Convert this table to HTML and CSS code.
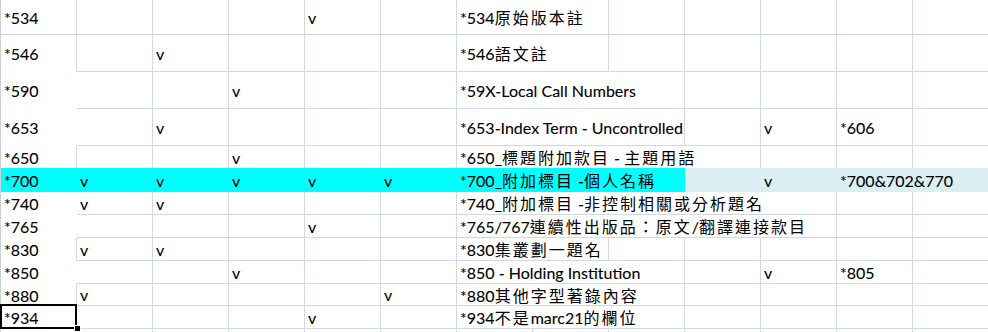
FILE: index.html
```html
<!DOCTYPE html>
<html lang="zh-Hant">
<head>
<meta charset="utf-8">
<title>Sheet</title>
<link rel="stylesheet" href="styles.css">
</head>
<body>
<div class="sheet">
  <div class="row r35">
    <div class="c">*534</div><div class="c"></div><div class="c"></div><div class="c"></div><div class="c">v</div><div class="c"></div>
    <div class="c s2"><span class="t">*534<span class="k">原始版本註</span></span></div>
    <div class="c"></div><div class="c"></div><div class="c"></div><div class="c"></div><div class="c"></div>
  </div>
  <div class="row r37">
    <div class="c nb">*546</div><div class="c"></div><div class="c">v</div><div class="c"></div><div class="c"></div><div class="c"></div>
    <div class="c s2"><span class="t">*546<span class="k">語文註</span></span></div>
    <div class="c"></div><div class="c"></div><div class="c"></div><div class="c"></div><div class="c"></div>
  </div>
  <div class="row r37">
    <div class="c nb nr">*590</div><div class="c"></div><div class="c"></div><div class="c">v</div><div class="c"></div><div class="c"></div>
    <div class="c s3"><span class="t">*59X-Local Call Numbers</span></div>
    <div class="c"></div><div class="c"></div><div class="c"></div><div class="c"></div>
  </div>
  <div class="row r37">
    <div class="c nb nr">*653</div><div class="c"></div><div class="c">v</div><div class="c"></div><div class="c"></div><div class="c"></div>
    <div class="c s3"><span class="t">*653-Index Term - Uncontrolled</span></div>
    <div class="c"></div><div class="c">v</div><div class="c">*606</div><div class="c"></div>
  </div>
  <div class="row r22">
    <div class="c nb">*650</div><div class="c nb"></div><div class="c nb"></div><div class="c nb">v</div><div class="c nb"></div><div class="c nb"></div>
    <div class="c nb s4"><span class="t">*650_<span class="k">標題附加款目</span> - <span class="k">主題用語</span></span></div>
    <div class="c nb"></div><div class="c nb"></div><div class="c nb"></div>
  </div>
  <div class="row r24">
    <div class="c f cy">*700</div><div class="c f cy">v</div><div class="c f cy">v</div><div class="c f cy">v</div><div class="c f cy">v</div><div class="c f cy">v</div>
    <div class="c f cy s3"><span class="t">*700_<span class="k">附加標目</span> -<span class="k">個人名稱</span></span></div>
    <div class="c f lb"></div><div class="c f lb">v</div><div class="c f lb"><span class="t">*700&amp;702&amp;770</span></div><div class="c f lb"></div>
  </div>
  <div class="row r23">
    <div class="c nb nr">*740</div><div class="c">v</div><div class="c">v</div><div class="c"></div><div class="c"></div><div class="c"></div>
    <div class="c s5"><span class="t">*740_<span class="k">附加標目</span> -<span class="k">非控制相關或分析題名</span></span></div>
    <div class="c"></div><div class="c"></div>
  </div>
  <div class="row r23">
    <div class="c nb nr">*765</div><div class="c"></div><div class="c"></div><div class="c"></div><div class="c">v</div><div class="c"></div>
    <div class="c s5"><span class="t">*765/767<span class="k">連續性出版品：原文</span>/<span class="k">翻譯連接款目</span></span></div>
    <div class="c"></div><div class="c"></div>
  </div>
  <div class="row r23">
    <div class="c nb">*830</div><div class="c">v</div><div class="c">v</div><div class="c"></div><div class="c"></div><div class="c"></div>
    <div class="c s2"><span class="t">*830<span class="k">集叢劃一題名</span></span></div>
    <div class="c"></div><div class="c"></div><div class="c"></div><div class="c"></div><div class="c"></div>
  </div>
  <div class="row r23">
    <div class="c nb nr">*850</div><div class="c"></div><div class="c"></div><div class="c">v</div><div class="c"></div><div class="c"></div>
    <div class="c s3"><span class="t">*850 - Holding Institution</span></div>
    <div class="c"></div><div class="c">v</div><div class="c">*805</div><div class="c"></div>
  </div>
  <div class="row r22">
    <div class="c nb">*880</div><div class="c">v</div><div class="c"></div><div class="c"></div><div class="c"></div><div class="c">v</div>
    <div class="c s3"><span class="t">*880<span class="k">其他字型著錄內容</span></span></div>
    <div class="c"></div><div class="c"></div><div class="c"></div><div class="c"></div>
  </div>
  <div class="row r23">
    <div class="c sel">*934<span class="selbox"></span><span class="handle"></span></div><div class="c"></div><div class="c"></div><div class="c"></div><div class="c">v</div><div class="c"></div>
    <div class="c s3"><span class="t">*934<span class="k">不是</span>marc21<span class="k">的欄位</span></span></div>
    <div class="c"></div><div class="c"></div><div class="c"></div><div class="c"></div>
  </div>
  <div class="row r3">
    <div class="c nb"></div><div class="c nb"></div><div class="c nb"></div><div class="c nb"></div><div class="c nb"></div><div class="c nb"></div><div class="c nb"></div>
    <div class="c nb"></div><div class="c nb"></div><div class="c nb"></div><div class="c nb"></div><div class="c nb"></div><div class="c nb"></div>
  </div>
</div>
</body>
</html>
```

FILE: styles.css
```css
html, body {
  margin: 0;
  padding: 0;
  background: #ffffff;
  overflow: hidden;
  width: 988px;
  height: 332px;
}

.sheet {
  width: 989px;
  border-left: 1px solid #c8d0de;
  box-sizing: border-box;
  font-family: "Lato", "Noto Sans CJK TC", sans-serif;
  font-size: 16px;
  color: #000000;
  -webkit-text-stroke: 0.1px #000000;
}

.row {
  display: grid;
  grid-template-columns: repeat(13, 76px);
}

.r35 { height: 35px; }
.r37 { height: 37px; }
.r22 { height: 22px; }
.r24 { height: 24px; }
.r23 { height: 23px; }
.r3 { height: 3px; }

.c {
  box-sizing: border-box;
  border-right: 1px solid #d0d7e5;
  border-bottom: 1px solid #d0d7e5;
  padding: 1px 3px 0 3px;
  display: flex;
  align-items: center;
  white-space: nowrap;
  line-height: 18px;
  min-width: 0;
  position: relative;
}

.r3 .c { padding: 0; }

.c.nr { border-right: none; }
.c.nb { border-bottom: none; }

.c.f { border: none; }
.c.cy { background: #00ffff; }
.c.lb { background: #daeef3; }

.s2 { grid-column: span 2; }
.s3 { grid-column: span 3; }
.s4 { grid-column: span 4; }
.s5 { grid-column: span 5; }

.t {
  position: relative;
  z-index: 1;
  line-height: 18px;
}

.k {
  font-family: "Noto Sans CJK TC", "Noto Sans CJK SC", sans-serif;
  font-size: 16px;
  letter-spacing: 2px;
  line-height: 18px;
  -webkit-text-stroke: 0;
}

.selbox {
  position: absolute;
  z-index: 5;
  left: -1px;
  top: -2px;
  right: -1px;
  bottom: -1px;
  border: 2px solid #000000;
}

.handle {
  position: absolute;
  z-index: 6;
  left: 74px;
  top: 20px;
  width: 5px;
  height: 5px;
  background: #000000;
  box-shadow: 0 0 0 1px #ffffff;
}
```
